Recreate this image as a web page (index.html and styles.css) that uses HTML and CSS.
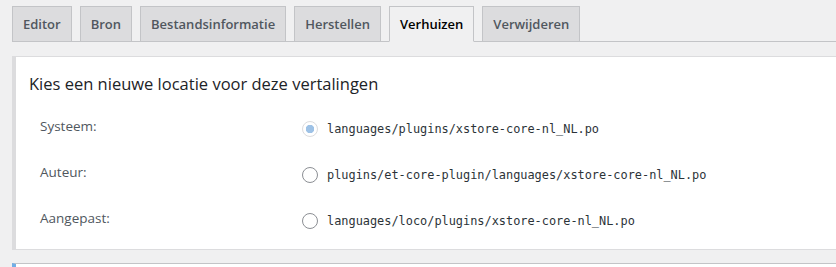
FILE: index.html
```html
<!DOCTYPE html>
<html lang="nl">

<head>
    <meta charset="UTF-8">
    <title>Verhuizen</title>
    <link rel="stylesheet" href="styles.css">
</head>

<body>
    <div class="wrap">
        <nav class="nav-tabs">
            <a class="nav-tab" href="#">Editor</a>
            <a class="nav-tab" href="#">Bron</a>
            <a class="nav-tab" href="#">Bestandsinformatie</a>
            <a class="nav-tab" href="#">Herstellen</a>
            <a class="nav-tab active" href="#">Verhuizen</a>
            <a class="nav-tab" href="#">Verwijderen</a>
        </nav>

        <form class="panel">
            <h3>Kies een nieuwe locatie voor deze vertalingen</h3>
            <div class="row">
                <span class="label">Systeem:</span>
                <label class="choice">
                    <input type="radio" name="dest" checked disabled>
                    <code>languages/plugins/xstore-core-nl_NL.po</code>
                </label>
            </div>
            <div class="row">
                <span class="label">Auteur:</span>
                <label class="choice">
                    <input type="radio" name="dest">
                    <code>plugins/et-core-plugin/languages/xstore-core-nl_NL.po</code>
                </label>
            </div>
            <div class="row">
                <span class="label">Aangepast:</span>
                <label class="choice">
                    <input type="radio" name="dest">
                    <code>languages/loco/plugins/xstore-core-nl_NL.po</code>
                </label>
            </div>
        </form>

        <div class="panel next"></div>
    </div>
</body>

</html>
```

FILE: styles.css
```css
body {
    margin: 0;
    background-color: #f0f0f1;
    font-family: "Open Sans", Arial, sans-serif;
    color: #3c434a;
    overflow: hidden;
}

.wrap {
    padding: 6px 0 0 12px;
}

/* tabs */
.nav-tabs {
    display: flex;
    gap: 8px;
    border-bottom: 1px solid #c3c4c7;
}

.nav-tab {
    display: block;
    padding: 5px 10px;
    margin-bottom: -1px;
    border: 1px solid #c3c4c7;
    background-color: #dcdcde;
    color: #50575e;
    font-size: 13px;
    font-weight: 600;
    line-height: 24px;
    text-decoration: none;
}

.nav-tab.active {
    background-color: #f0f0f1;
    border-bottom-color: #f0f0f1;
    color: #000;
}

/* panel */
.panel {
    margin: 14px -20px 0 0;
    padding: 0 0 5px 13px;
    background-color: #fff;
    border-top: 1px solid #dcdcde;
    border-left: 4px solid #dcdcde;
    border-bottom: 1px solid #dcdcde;
}

.panel h3 {
    margin: 15px 0 10px;
    font-size: 16.5px;
    font-weight: 400;
    line-height: 24px;
    color: #1d2327;
}

.row {
    display: flex;
    height: 46px;
}

.label {
    width: 262px;
    padding: 10px 0 0 11px;
    font-size: 13.5px;
    line-height: 20px;
    color: #50575e;
}

.choice {
    display: flex;
    align-items: center;
    gap: 9px;
}

.choice input {
    appearance: none;
    width: 16px;
    height: 16px;
    margin: 0;
    border: 1px solid #8c8f94;
    border-radius: 50%;
    background: #fff;
}

.choice input:checked {
    border-color: #dcdcde;
    background: radial-gradient(circle, #9ec2e6 0 4px, #fff 4.5px);
}

.choice code {
    font-family: "DejaVu Sans Mono", monospace;
    font-size: 11.9px;
    color: #2c3338;
}

.panel.next {
    margin-top: 13px;
    height: 4px;
    padding: 0;
    border-left-color: #72aee6;
    border-top-color: #c3c4c7;
}
```
